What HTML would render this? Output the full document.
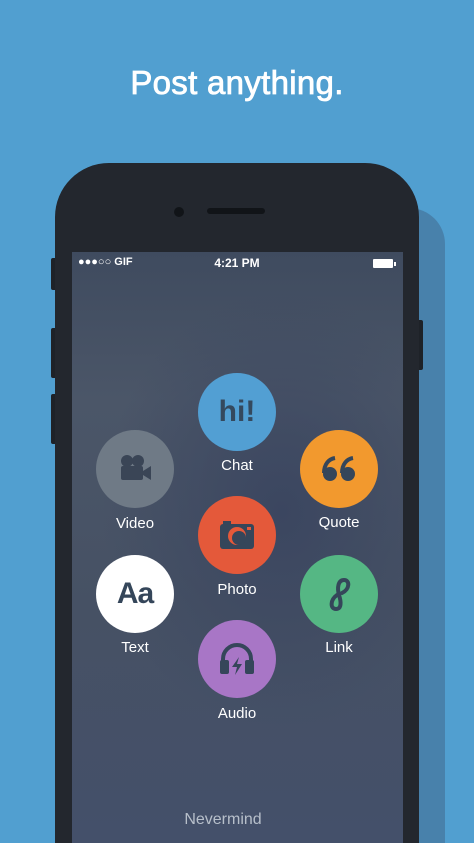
<!DOCTYPE html>
<html style="overflow:hidden"><head><style>
*{margin:0;padding:0;box-sizing:border-box}
html,body{width:474px;height:843px;overflow:hidden;background:#519fd0}
#w{position:relative;width:474px;height:843px;overflow:hidden;font-family:"Liberation Sans",sans-serif}
.a{position:absolute}
h1{position:absolute;top:64px;left:0;width:474px;text-align:center;color:#fff;font-size:33px;font-weight:normal;letter-spacing:0.3px;-webkit-text-stroke:0.8px #fff}
.c{position:absolute;width:78px;height:78px;border-radius:50%;display:flex;align-items:center;justify-content:center}
.l{position:absolute;width:120px;text-align:center;color:#fff;font-size:15px}
</style></head><body><div id="w">
<h1>Post anything.</h1>
<div class="a" style="left:400px;top:208px;width:45px;height:635px;background:#4881ab;border-radius:0 36px 0 0"></div>
<div class="a" style="left:51px;top:258px;width:6px;height:32px;background:#1e2228;border-radius:2px"></div>
<div class="a" style="left:51px;top:328px;width:6px;height:50px;background:#1e2228;border-radius:2px"></div>
<div class="a" style="left:51px;top:394px;width:6px;height:50px;background:#1e2228;border-radius:2px"></div>
<div class="a" style="left:416px;top:320px;width:7px;height:50px;background:#1e2228;border-radius:2px"></div>
<div class="a" style="left:55px;top:163px;width:364px;height:680px;background:#23272e;border-radius:54px 54px 0 0"></div>
<div class="a" style="left:174px;top:207px;width:10px;height:10px;border-radius:50%;background:#111418"></div>
<div class="a" style="left:207px;top:208px;width:58px;height:6px;border-radius:3px;background:#111418"></div>
<div class="a" style="left:72px;top:252px;width:331px;height:591px;background:radial-gradient(ellipse 180px 220px at 210px 260px,#3b4660 0%,rgba(59,70,96,0) 100%),linear-gradient(#3f4b5f 0%,#4b5668 25%,#465164 60%,#44506a 100%)"></div>
<div class="a" style="left:78px;top:256px;color:#fff;font-size:11px;font-weight:bold">●●●○○ GIF</div>
<div class="a" style="left:0;width:474px;top:256px;text-align:center;color:#fff;font-size:12px;font-weight:bold">4:21 PM</div>
<div class="a" style="left:373px;top:259px;width:20px;height:9px;border:1px solid #fff;border-radius:1px;background:#fff"></div>
<div class="a" style="left:394px;top:262px;width:2px;height:4px;background:#fff"></div>

<div class="c" style="left:198px;top:373px;background:#529fd3"><span style="color:#34495e;font-size:30px;font-weight:bold">hi!</span></div>
<div class="l" style="left:177px;top:457px">Chat</div>

<div class="c" style="left:96px;top:430px;background:#6f7a86"><svg width="40" height="30" viewBox="0 0 40 30"><circle cx="12" cy="7" r="6" fill="#3a4556"/><circle cx="23" cy="7" r="6" fill="#3a4556"/><rect x="6" y="12" width="22" height="14" rx="2" fill="#3a4556"/><path d="M28 17 L36 12 V26 L28 21Z" fill="#3a4556"/></svg></div>
<div class="l" style="left:75px;top:515px">Video</div>

<div class="c" style="left:300px;top:430px;background:#f2992e"><svg width="36" height="28" viewBox="0 0 36 28"><circle cx="9" cy="19" r="7" fill="#35465a"/><circle cx="27" cy="19" r="7" fill="#35465a"/><path d="M3 18 C3 9 8 4 14 3" fill="none" stroke="#35465a" stroke-width="4"/><path d="M21 18 C21 9 26 4 32 3" fill="none" stroke="#35465a" stroke-width="4"/></svg></div>
<div class="l" style="left:279px;top:514px">Quote</div>

<div class="c" style="left:198px;top:496px;background:#e4593a"><svg width="36" height="30" viewBox="0 0 36 30"><rect x="1" y="4" width="34" height="25" rx="3" fill="#35465a"/><rect x="4" y="1" width="8" height="5" fill="#35465a"/><circle cx="18" cy="16" r="9" fill="#e4593a"/><circle cx="20" cy="18" r="7" fill="#35465a"/><rect x="28" y="7" width="4" height="3" fill="#e4593a"/></svg></div>
<div class="l" style="left:177px;top:581px">Photo</div>

<div class="c" style="left:96px;top:555px;background:#fff"><span style="color:#35465a;font-size:30px;font-weight:bold;letter-spacing:-1px">Aa</span></div>
<div class="l" style="left:75px;top:639px">Text</div>

<div class="c" style="left:300px;top:555px;background:#55b784"><svg width="30" height="36" viewBox="0 0 30 36"><path d="M13 19 C6 24 6 33 12 33 C18 33 17 25 15 19 C13 12 14 4 20 4 C26 4 26 13 18 17" fill="none" stroke="#35465a" stroke-width="4" stroke-linecap="round"/></svg></div>
<div class="l" style="left:279px;top:639px">Link</div>

<div class="c" style="left:198px;top:620px;background:#a876c6"><svg width="40" height="34" viewBox="0 0 40 34"><path d="M6 20 V17 A14 14 0 0 1 34 17 V20" fill="none" stroke="#35465a" stroke-width="4"/><rect x="3" y="18" width="9" height="14" rx="2" fill="#35465a"/><rect x="28" y="18" width="9" height="14" rx="2" fill="#35465a"/><path d="M22 15 L15 25 H20 L18 33 L25 22 H20Z" fill="#35465a"/></svg></div>
<div class="l" style="left:177px;top:705px">Audio</div>

<div class="l" style="left:163px;width:120px;top:811px;color:#b7bfca;font-size:16px">Nevermind</div>
</div></body></html>
